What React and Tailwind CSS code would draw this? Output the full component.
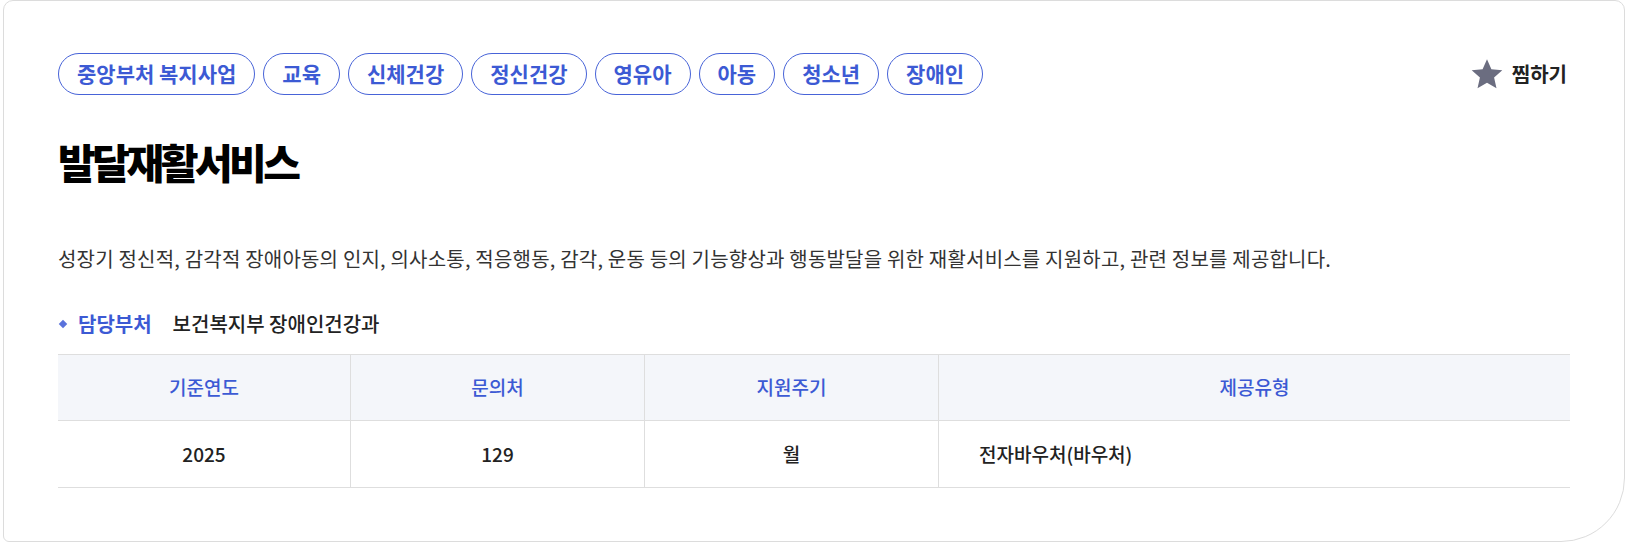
const tags = ['중앙부처 복지사업', '교육', '신체건강', '정신건강', '영유아', '아동', '청소년', '장애인']

const columns = [
  { label: '기준연도', value: '2025' },
  { label: '문의처', value: '129' },
  { label: '지원주기', value: '월' },
  { label: '제공유형', value: '전자바우처(바우처)', left: true },
]

const StarIcon = () => (
  <svg width="34" height="34" viewBox="0 0 24 24" fill="#6b6d80">
    <path d="M12 1.6l3.1 7.1 7.7.7-5.8 5.1 1.7 7.6L12 18.1l-6.7 4 1.7-7.6-5.8-5.1 7.7-.7z" />
  </svg>
)

export default function App() {
  return (
    <div className="bg-white px-[3px] font-['Noto_Sans_CJK_KR','Noto_Sans',sans-serif]">
      <div className="border border-[#dcdcdc] rounded-tl-[10px] rounded-tr-[10px] rounded-bl-[6px] rounded-br-[64px] px-[54px] pt-[52px] pb-[53px]">
        {/* 분류 태그 + 찜하기 */}
        <div className="flex items-center justify-between">
          <div className="flex gap-2">
            {tags.map((tag) => (
              <span
                key={tag}
                className="flex h-[42px] items-center rounded-full border border-[#4763d8] px-[18px] text-[21px] font-semibold text-[#3c5ad4]"
              >
                {tag}
              </span>
            ))}
          </div>
          <button className="flex items-center gap-[8px] pr-[3px] text-[20px] font-semibold text-[#222]">
            <StarIcon />
            찜하기
          </button>
        </div>

        {/* 제목 */}
        <h1 className="mt-[42px] text-[41px] font-black leading-[48px] tracking-[-3.5px] text-black">
          발달재활서비스
        </h1>

        <p className="mt-[60px] text-[20px] leading-[28px] tracking-[0.2px] text-[#333]">
          성장기 정신적, 감각적 장애아동의 인지, 의사소통, 적응행동, 감각, 운동 등의 기능향상과 행동발달을 위한 재활서비스를 지원하고, 관련 정보를 제공합니다.
        </p>

        {/* 담당부처 */}
        <div className="mt-[37px] flex items-center text-[20px] leading-[28px]">
          <span className="ml-[2px] mr-[12px] h-[6px] w-[6px] rotate-45 bg-[#5a72dc]" />
          <span className="font-bold text-[#3c5ad4]">담당부처</span>
          <span className="ml-[21px] font-medium text-[#222]">보건복지부 장애인건강과</span>
        </div>

        {/* 정보 표 */}
        <div className="mt-[16px] border-y border-[#dedede]">
          <div className="grid grid-cols-[292px_294px_294px_1fr] border-b border-[#dedede] bg-[#f4f6fa]">
            {columns.map((col, i) => (
              <div
                key={col.label}
                className={`flex h-[65px] items-center justify-center text-[19px] font-medium text-[#3c5ad4] ${i > 0 ? 'border-l border-[#dedede]' : ''}`}
              >
                {col.label}
              </div>
            ))}
          </div>
          <div className="grid grid-cols-[292px_294px_294px_1fr]">
            {columns.map((col, i) => (
              <div
                key={col.label}
                className={`flex h-[66px] items-center text-[19px] font-medium text-[#222] ${col.left ? 'justify-start pl-[40px]' : 'justify-center'} ${i > 0 ? 'border-l border-[#dedede]' : ''}`}
              >
                {col.value}
              </div>
            ))}
          </div>
        </div>
      </div>
    </div>
  )
}
